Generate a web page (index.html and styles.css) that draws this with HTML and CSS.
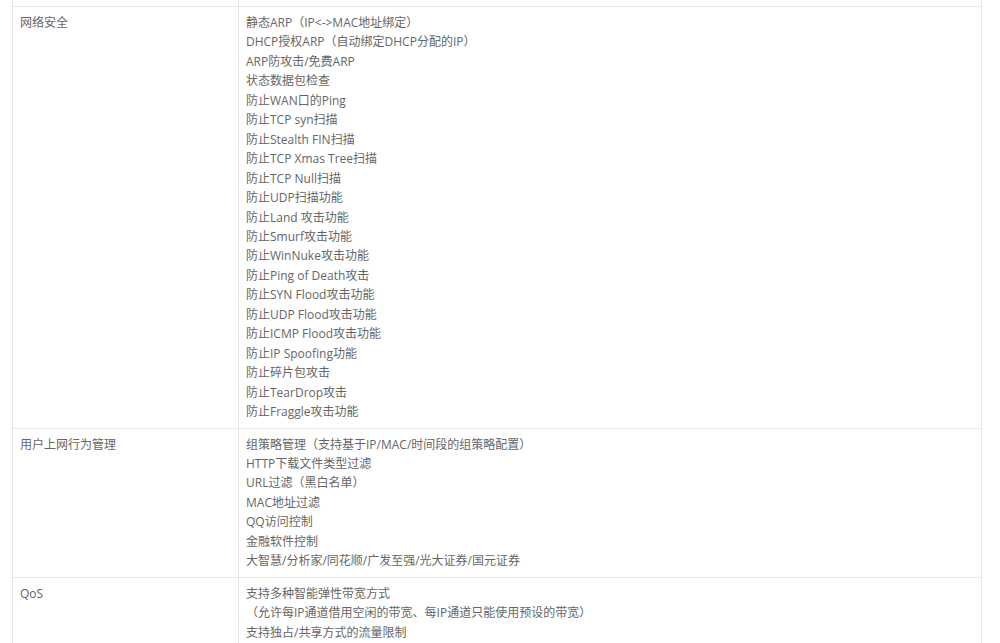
FILE: index.html
```html
<!DOCTYPE html>
<html lang="zh-CN">

<head>
    <meta charset="UTF-8">
    <meta name="viewport" content="width=device-width, initial-scale=1.0">
    <!-- Estilos de la tabla de especificaciones -->
    <link rel="stylesheet" href="styles.css">
    <title>产品参数</title>
</head>

<body>
    <!-- Contenedor principal de la tabla -->
    <div class="contenedor">
        <table class="tablaParametros">
            <!-- Final de la fila anterior (cortada en la parte superior) -->
            <tr class="filaCortada">
                <td class="etiqueta"></td>
                <td class="detalle"></td>
            </tr>
            <tr>
                <td class="etiqueta">网络安全</td>
                <td class="detalle">
                    静态ARP（IP&lt;-&gt;MAC地址绑定）<br>
                    DHCP授权ARP（自动绑定DHCP分配的IP）<br>
                    ARP防攻击/免费ARP<br>
                    状态数据包检查<br>
                    防止WAN口的Ping<br>
                    防止TCP syn扫描<br>
                    防止Stealth FIN扫描<br>
                    防止TCP Xmas Tree扫描<br>
                    防止TCP Null扫描<br>
                    防止UDP扫描功能<br>
                    防止Land 攻击功能<br>
                    防止Smurf攻击功能<br>
                    防止WinNuke攻击功能<br>
                    防止Ping of Death攻击<br>
                    防止SYN Flood攻击功能<br>
                    防止UDP Flood攻击功能<br>
                    防止ICMP Flood攻击功能<br>
                    防止IP Spoofing功能<br>
                    防止碎片包攻击<br>
                    防止TearDrop攻击<br>
                    防止Fraggle攻击功能
                </td>
            </tr>
            <tr>
                <td class="etiqueta">用户上网行为管理</td>
                <td class="detalle">
                    组策略管理（支持基于IP/MAC/时间段的组策略配置）<br>
                    HTTP下载文件类型过滤<br>
                    URL过滤（黑白名单）<br>
                    MAC地址过滤<br>
                    QQ访问控制<br>
                    金融软件控制<br>
                    大智慧/分析家/同花顺/广发至强/光大证券/国元证券
                </td>
            </tr>
            <tr>
                <td class="etiqueta">QoS</td>
                <td class="detalle">
                    支持多种智能弹性带宽方式<br>
                    （允许每IP通道借用空闲的带宽、每IP通道只能使用预设的带宽）<br>
                    支持独占/共享方式的流量限制
                </td>
            </tr>
        </table>
    </div>
</body>

</html>
```

FILE: styles.css
```css
body {
    margin: 0px;
    background-color: #fff;
    font-family: "Open Sans", "Noto Sans CJK SC", sans-serif;
    font-size: 12px;
    color: #666;
}

.contenedor {
    padding: 0px 12px;
}

.tablaParametros {
    width: 970px;
    border-collapse: collapse;
}

.tablaParametros td {
    border: 1px solid #e6e6e6;
    padding: 6px 7px;
    line-height: 19.45px;
    vertical-align: top;
}

.etiqueta {
    width: 211px;
}

.filaCortada td {
    border-top: 0px;
    padding: 0px;
    height: 6px;
    line-height: 6px;
}
```
